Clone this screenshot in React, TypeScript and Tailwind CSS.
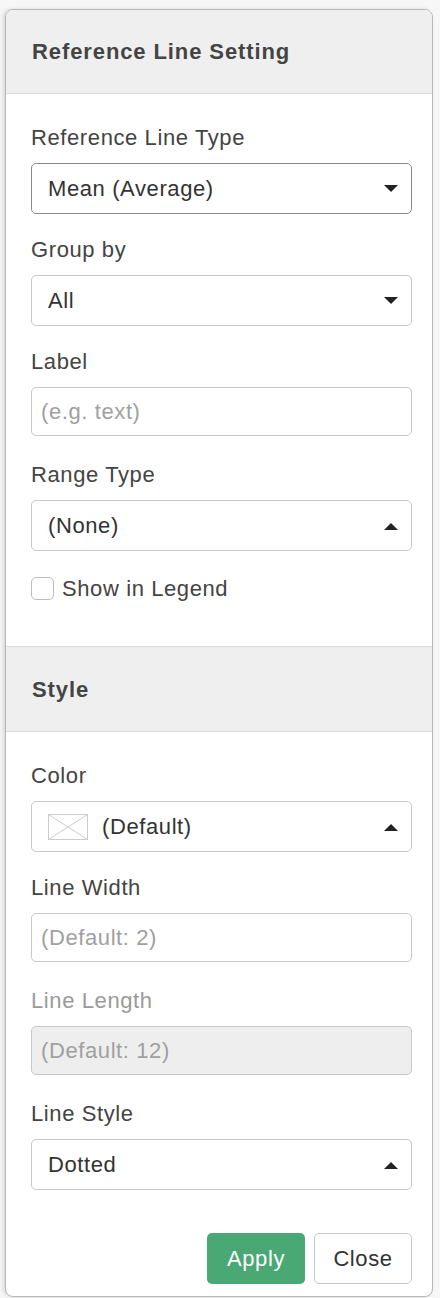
import React from "react"

const font = { fontFamily: '"Liberation Sans", Arial, sans-serif' }

function Caret({ up }: { up?: boolean }) {
  return (
    <svg width="14" height="8" viewBox="0 0 14 8" className="shrink-0">
      {up ? (
        <polygon points="0,8 14,8 7,1" fill="#222" />
      ) : (
        <polygon points="0,0 14,0 7,7" fill="#222" />
      )}
    </svg>
  )
}

function Label({ children, muted }: { children: React.ReactNode; muted?: boolean }) {
  return (
    <div
      className={`text-[22px] tracking-[0.6px] leading-[28px] mb-[11px] ${
        muted ? "text-[#9a9a9a]" : "text-[#444]"
      }`}
    >
      {children}
    </div>
  )
}

function Select({
  value,
  up,
  focused,
  icon,
}: {
  value: string
  up?: boolean
  focused?: boolean
  icon?: boolean
}) {
  return (
    <div
      className={`h-[51px] rounded-[5px] border flex items-center pl-[16px] pr-[13px] bg-white ${
        focused ? "border-[#8a8a8a]" : "border-[#c8c8c8]"
      }`}
    >
      {icon && (
        <svg width="40" height="26" viewBox="0 0 40 26" className="mr-[14px] shrink-0">
          <rect x="0.5" y="0.5" width="39" height="25" fill="white" stroke="#ccc" />
          <line x1="0.5" y1="0.5" x2="39.5" y2="25.5" stroke="#ccc" />
          <line x1="39.5" y1="0.5" x2="0.5" y2="25.5" stroke="#ccc" />
        </svg>
      )}
      <span className="flex-1 text-[22px] tracking-[0.6px] text-[#333]">{value}</span>
      <Caret up={up} />
    </div>
  )
}

function Input({ placeholder, disabled }: { placeholder: string; disabled?: boolean }) {
  return (
    <div
      className={`h-[49px] rounded-[5px] border border-[#c8c8c8] flex items-center pl-[9px] text-[22px] tracking-[0.6px] text-[#a0a0a0] ${
        disabled ? "bg-[#eeeeee]" : "bg-white"
      }`}
    >
      {placeholder}
    </div>
  )
}

export default function App() {
  return (
    <div className="w-[440px] h-[1298px] bg-[#f7f7f7] pt-[9px] pl-[5px] overflow-hidden" style={font}>
      <div className="w-[428px] h-[1288px] bg-white border border-[#b8b8b8] rounded-[8px] shadow-[-2px_0_4px_rgba(0,0,0,0.12)] overflow-hidden flex flex-col">
        <div className="h-[84px] shrink-0 bg-[#efefef] border-b border-[#dcdcdc] flex items-center pl-[26px]">
          <h2 className="text-[22px] tracking-[0.9px] font-bold text-[#444]">Reference Line Setting</h2>
        </div>

        <div className="pl-[25px] pr-[20px] pt-[30px] pb-[46px]">
          <div className="mb-[22px]">
            <Label>Reference Line Type</Label>
            <Select value="Mean (Average)" focused />
          </div>
          <div className="mb-[22px]">
            <Label>Group by</Label>
            <Select value="All" />
          </div>
          <div className="mb-[25px]">
            <Label>Label</Label>
            <Input placeholder="(e.g. text)" />
          </div>
          <div>
            <Label>Range Type</Label>
            <Select value="(None)" up />
          </div>
          <label className="flex items-center gap-[8px] mt-[25px] h-[24px]">
            <span className="w-[23px] h-[23px] rounded-[5px] border border-[#bdbdbd] bg-white shrink-0" />
            <span className="text-[22px] tracking-[0.6px] text-[#444]">Show in Legend</span>
          </label>
        </div>

        <div className="h-[86px] shrink-0 bg-[#efefef] border-y border-[#dcdcdc] flex items-center pl-[26px]">
          <h2 className="text-[22px] tracking-[0.9px] font-bold text-[#444]">Style</h2>
        </div>

        <div className="pl-[25px] pr-[20px] pt-[30px]">
          <div className="mb-[22px]">
            <Label>Color</Label>
            <Select value="(Default)" up icon />
          </div>
          <div className="mb-[25px]">
            <Label>Line Width</Label>
            <Input placeholder="(Default: 2)" />
          </div>
          <div className="mb-[25px]">
            <Label muted>Line Length</Label>
            <Input placeholder="(Default: 12)" disabled />
          </div>
          <div>
            <Label>Line Style</Label>
            <Select value="Dotted" up />
          </div>

          <div className="flex justify-end gap-[9px] mt-[43px]">
            <button className="w-[98px] h-[51px] rounded-[5px] bg-[#4aa874] text-white text-[22px] tracking-[0.6px]">
              Apply
            </button>
            <button className="w-[98px] h-[51px] rounded-[5px] border border-[#c8c8c8] bg-white text-[#333] text-[22px] tracking-[0.6px]">
              Close
            </button>
          </div>
        </div>
      </div>
    </div>
  )
}
